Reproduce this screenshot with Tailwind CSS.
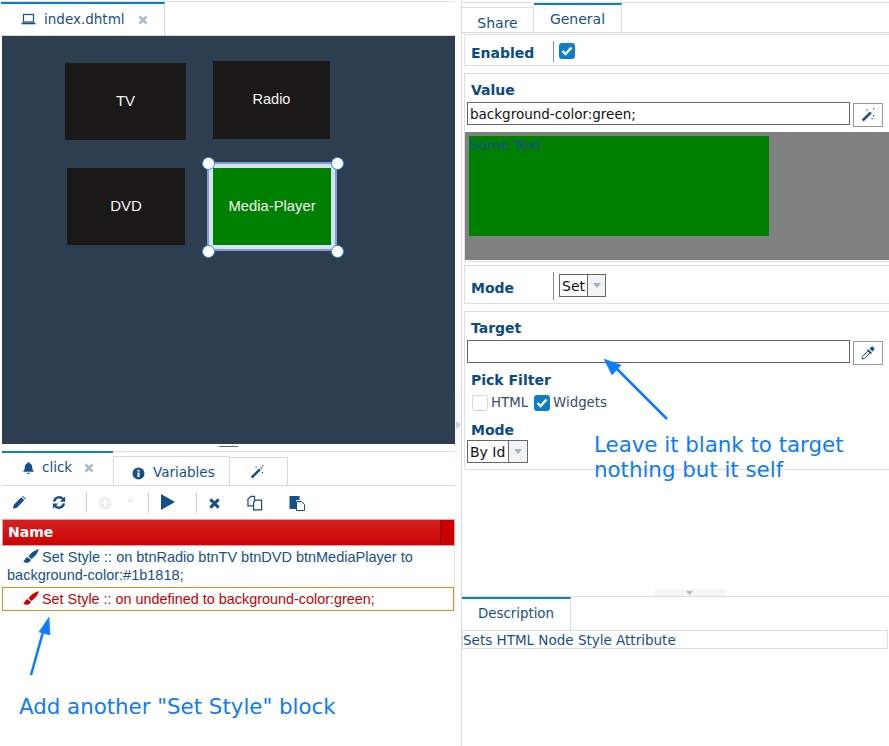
<!DOCTYPE html>
<html lang="en">
<head>
<meta charset="UTF-8">
<title>index.dhtml</title>
<script src="https://cdn.jsdelivr.net/npm/@tailwindcss/browser@4"></script>
</head>
<body class="bg-white">
<div class="relative w-[889px] h-[746px] overflow-hidden flex font-['DejaVu_Sans',sans-serif] text-[14px] text-[#15508c]">

  <!-- left pane -->
  <div class="w-[453px] ml-[2px] h-full flex flex-col shrink-0">
    <div class="h-[35px] mt-[1px] border-t border-b border-t-[#dcdfe3] border-b-[#d5d8dc] flex shrink-0 -ml-[1px]">
      <div class="w-[164px] h-[33px] border-t-2 border-t-[#0d7fc4] border-r border-r-[#d5d8dc] flex items-center pl-[20px]">
        <svg width="15" height="13" viewBox="0 0 15 13" class="mr-[8px]" fill="none" stroke="#15508c" stroke-width="1.2"><rect x="2.500" y="1.500" width="10" height="7.500"/><path d="M0.500 10.500h14" stroke-width="1.600"/></svg>
        <span class="leading-none text-[13.500px]">index.dhtml</span>
        <svg width="10" height="10" viewBox="0 0 10 10" class="ml-[13px]"><path d="M1.500 1.500l7 7M8.500 1.500l-7 7" stroke="#a9bccd" stroke-width="2.800"/></svg>
      </div>
    </div>

    <!-- canvas -->
    <div class="relative h-[408px] bg-[#2c3e50] shrink-0 font-['Liberation_Sans',sans-serif] text-[#f5f5f5]">
      <div class="absolute left-[63px] top-[27px] w-[121px] h-[77px] bg-[#1b1818] flex items-center justify-center text-[15px]">TV</div>
      <div class="absolute left-[211px] top-[25px] w-[117px] h-[78px] bg-[#1b1818] flex items-center justify-center text-[14.500px]">Radio</div>
      <div class="absolute left-[65px] top-[132px] w-[118px] h-[77px] bg-[#1b1818] flex items-center justify-center text-[15px]">DVD</div>
      <div class="absolute left-[205px] top-[126px] w-[130px] h-[89px] border-2 border-[#7b9ed6] bg-[#d8e2f0] p-[4px]">
        <div class="w-full h-full bg-[#008000] flex items-center justify-center text-[14.800px]">Media-Player</div>
      </div>
      <div class="absolute left-[200px] top-[121px] w-[13px] h-[13px] rounded-full bg-white border border-[#2a8fd8]"></div>
      <div class="absolute left-[329px] top-[121px] w-[13px] h-[13px] rounded-full bg-white border border-[#2a8fd8]"></div>
      <div class="absolute left-[200px] top-[209px] w-[13px] h-[13px] rounded-full bg-white border border-[#2a8fd8]"></div>
      <div class="absolute left-[329px] top-[209px] w-[13px] h-[13px] rounded-full bg-white border border-[#2a8fd8]"></div>
    </div>

    <!-- horizontal splitter -->
    <div class="h-[7px] shrink-0 flex justify-center">
      <div class="w-[19px] h-px bg-[#666] mt-[2px]"></div>
    </div>

    <!-- event tabs -->
    <div class="h-[35px] border-t border-t-[#dcdfe3] border-b border-b-[#d5d8dc] flex shrink-0">
      <div class="w-[111px] h-[34px] -mt-px border-t-2 border-t-[#0d7fc4] flex items-center pl-[20px] pb-[2px]">
        <svg width="13" height="14" viewBox="0 0 14 14" fill="#15508c" class="mr-[7px]"><path d="M7 0.500a1 1 0 0 1 1 1v0.400c2 .5 3 2.200 3 4.100 0 3 1 4 2 5H1c1-1 2-2 2-5 0-1.900 1-3.600 3-4.100V1.500a1 1 0 0 1 1-1z"/><path d="M5.500 12h3a1.500 1.500 0 0 1-3 0z"/></svg>
        <span class="leading-none text-[13.500px]">click</span>
        <svg width="10" height="10" viewBox="0 0 10 10" class="ml-[12px]"><path d="M1.500 1.500l7 7M8.500 1.500l-7 7" stroke="#a9bccd" stroke-width="2.800"/></svg>
      </div>
      <div class="w-[117px] h-[30px] mt-[4px] border-t border-l border-r border-[#d5d8dc] flex items-center pl-[18px] pt-[3px]">
        <svg width="13" height="13" viewBox="0 0 13 13" class="mr-[8px]"><circle cx="6.500" cy="6.500" r="6" fill="#15508c"/><rect x="5.500" y="5.500" width="2" height="4.500" fill="#fff"/><rect x="5.500" y="2.800" width="2" height="1.800" fill="#fff"/></svg>
        <span class="leading-none text-[13.500px]">Variables</span>
      </div>
      <div class="w-[58px] h-[29px] mt-[5px] border-t border-r border-[#d5d8dc] flex items-center pl-[20px]">
        <svg width="14" height="14" viewBox="0 0 14 14" fill="#15508c"><path d="M0.800 11.600 9 3.400l1.800 1.800L2.600 13.400z"/><path d="M9.800 2.600l1-1 1.800 1.800-1 1z" fill="#7a8fa5"/><path d="M5.500 1.500h1.200v1.200H5.500zM12 7h1.200v1.200H12zM12 0.300h1.200v1.200H12z"/></svg>
      </div>
    </div>

    <!-- toolbar -->
    <div class="h-[33px] flex items-center shrink-0 relative">
      <svg width="14" height="15" viewBox="0 0 16 16" fill="#15508c" class="ml-[10px]"><path d="M1 15l1-4.500L10.500 2 14 5.500 5.500 14z"/><path d="M11.500 1l1-.5 3 3-.5 1z"/></svg>
      <svg width="14" height="15" viewBox="0 0 16 16" fill="none" stroke="#15508c" stroke-width="2.800" class="ml-[26px]"><path d="M2.500 7A5.800 5.800 0 0 1 13 4.500"/><path d="M13.500 9A5.800 5.800 0 0 1 3 11.500"/><path d="M15 1v6h-6z" fill="#15508c" stroke="none"/><path d="M1 15V9h6z" fill="#15508c" stroke="none"/></svg>
      <div class="w-px h-[20px] bg-[#c6c9cc] ml-[20px]"></div>
      <svg width="14" height="14" viewBox="0 0 16 16" class="ml-[11px]"><circle cx="8" cy="8" r="7.500" fill="#eceef0"/><path d="M7 4h2v3h3v2H9v3H7V9H4V7h3z" fill="#fff"/></svg>
      <svg width="7" height="4" viewBox="0 0 9 5" class="ml-[15px] mb-[4px]"><path d="M0 0h9L4.500 5z" fill="#e9ebed"/></svg>
      <div class="w-px h-[20px] bg-[#c6c9cc] ml-[14px]"></div>
      <svg width="14" height="16" viewBox="0 0 14 16" class="ml-[12px] -mt-[2px]"><path d="M0 0l14 8-14 8z" fill="#15508c"/></svg>
      <div class="w-px h-[20px] bg-[#c6c9cc] ml-[21px]"></div>
      <svg width="11" height="11" viewBox="0 0 12 12" class="ml-[12px] mt-[2px]"><path d="M1.500 1.500l9 9M10.500 1.500l-9 9" stroke="#15508c" stroke-width="3.200"/></svg>
      <svg width="16" height="16" viewBox="0 0 17 16" fill="none" stroke="#15508c" stroke-width="1.300" class="ml-[27px]"><path d="M7 11H1V4l3-3h4v4"/><path d="M7 15.300V7.500l2-2.500h6.500v10.300z" fill="#fff"/></svg>
      <svg width="16" height="16" viewBox="0 0 16 16" class="ml-[26px]"><path d="M0.500 1h10v4H7v9H0.500z" fill="#15508c"/><path d="M7.500 6.500h5l3 3v6h-8z" fill="#fff" stroke="#15508c"/></svg>
    </div>

    <!-- event table -->
    <div class="h-[27px] shrink-0 flex bg-linear-to-b from-[#d71f1f] to-[#cc0000] border border-[#e3a0a0] text-white">
      <div class="flex-1 pl-[5px] font-bold text-[14px] leading-[25px]">Name</div>
      <div class="w-[14px] border-l border-l-[#7e1010] bg-[#cc0000]"></div>
    </div>
    <div class="border-r border-r-[#e1e3e6] font-['Liberation_Sans',sans-serif] text-[14.500px] leading-[18px] text-[#15508c] h-[65px] shrink-0">
      <div class="px-[5px] pt-[2px] h-[41px] w-[440px]">
        <svg width="16" height="15" viewBox="0 0 16 15" class="inline-block ml-[16px] -mt-[3px] mr-[3px]" fill="#15508c"><path d="M15.800 .3C12 1 7.500 4 5.500 7.500L8.500 10C11.500 8 15 4 15.800 .3z"/><path d="M4.500 8.200C2 8.500 2.500 11 .2 12.500 2.500 14.500 7 14.500 8 10.800z"/></svg>Set Style :: on btnRadio btnTV btnDVD btnMediaPlayer to background-color:#1b1818;
      </div>
      <div class="h-[24px] border border-[#ee8a1c] px-[4px] leading-[22px] text-[#cc0000] text-[14.400px] whitespace-nowrap">
        <svg width="16" height="15" viewBox="0 0 16 15" class="inline-block ml-[16px] -mt-[3px] mr-[3px]" fill="#cc0000"><path d="M15.800 .3C12 1 7.500 4 5.500 7.500L8.500 10C11.500 8 15 4 15.800 .3z"/><path d="M4.500 8.200C2 8.500 2.500 11 .2 12.500 2.500 14.500 7 14.500 8 10.800z"/></svg>Set Style :: on undefined to background-color:green;
      </div>
    </div>
  </div>

  <!-- vertical splitter -->
  <div class="w-[6px] shrink-0 h-full relative">
    <div class="absolute left-0 top-[390px] w-[6px] h-[69px] bg-[#f8f8f8]"></div>
    <svg width="5" height="8" viewBox="0 0 5 8" class="absolute left-px top-[421px]"><path d="M0 0l5 4-5 4z" fill="#c4cfdd"/></svg>
  </div>

  <!-- right pane -->
  <div class="flex-1 h-full border-l border-l-[#d5d8dc] flex flex-col min-w-0">
    <div class="h-[31px] shrink-0 mt-[2px] border-t border-t-[#dcdfe3] border-b border-b-[#d5d8dc] flex">
      <div class="w-[72px] h-[25px] mt-[4px] border-t border-t-[#dcdfe3] border-r border-r-[#d5d8dc] flex items-center justify-center pt-[7px]">Share</div>
      <div class="w-[88px] h-[29px] border-t-2 border-t-[#0d7fc4] border-r border-r-[#d5d8dc] flex items-center justify-center pt-[2px]">General</div>
    </div>

    <div class="ml-[2px] mt-px h-[32px] shrink-0 border border-[#dcdfe3] border-r-0 flex items-center">
      <div class="w-[88px] pl-[6px] font-bold text-[#0b4a85] pt-[6px]">Enabled</div>
      <div class="w-px h-[21px] bg-[#888] mt-[3px]"></div>
      <div class="ml-[5px] w-[16px] h-[16px] mt-px rounded-[3px] bg-[#0d7fc4] flex items-center justify-center">
        <svg width="12" height="10" viewBox="0 0 12 10" fill="none" stroke="#fff" stroke-width="2.400"><path d="M1.500 5l3 3 6-6.500"/></svg>
      </div>
    </div>

    <div class="ml-[2px] mt-[7px] h-[189px] shrink-0 border border-[#dcdfe3] border-r-0 flex flex-col">
      <div class="h-[28px] pl-[6px] pt-[7px] font-bold text-[#0b4a85] leading-[18px]">Value</div>
      <div class="flex h-[30px] pl-[2px]">
        <div class="w-[383px] h-[23px] border border-[#666] pl-[2px] leading-[23px] text-[#111] text-[13.500px]">background-color:green;</div>
        <div class="w-[30px] h-[24px] ml-[3px] mt-px border border-[#999] flex items-center justify-center">
          <svg width="14" height="14" viewBox="0 0 14 14" fill="#15508c"><path d="M0.800 11.600 9 3.400l1.800 1.800L2.600 13.400z"/><path d="M5.500 1.500h1.200v1.200H5.500zM12 7h1.200v1.200H12zM12 0.300h1.200v1.200H12zM10.500 10h1.200v1.200h-1.200z"/></svg>
        </div>
      </div>
      <div class="h-[128px] bg-[#808080] pl-[4px] pt-[4px]">
        <div class="w-[300px] h-[100px] bg-[#008000] text-[#15508c] text-[14px] leading-[18px]">Some Text</div>
      </div>
    </div>

    <div class="ml-[2px] mt-[3px] h-[39px] shrink-0 border border-[#dcdfe3] border-r-0 flex items-center">
      <div class="w-[88px] pl-[6px] font-bold text-[#0b4a85] pt-[7px]">Mode</div>
      <div class="w-px h-[28px] bg-[#888] mt-[3px]"></div>
      <div class="ml-[5px] mt-px h-[23px] flex border border-[#666] text-[#111]">
        <span class="px-[2px] leading-[23px]">Set</span>
        <span class="w-[18px] border-l border-l-[#666] bg-[#f2f3f5] flex items-center justify-center"><svg width="8" height="5" viewBox="0 0 8 5"><path d="M0 0h8L4 5z" fill="#9fb0c8"/></svg></span>
      </div>
    </div>

    <div class="ml-[2px] mt-[7px] h-[159px] shrink-0 border border-[#dcdfe3] border-r-0 flex flex-col">
      <div class="h-[28px] pl-[6px] pt-[7px] font-bold text-[#0b4a85] leading-[18px]">Target</div>
      <div class="flex h-[30px] pl-[2px]">
        <div class="w-[383px] h-[23px] border border-[#666]"></div>
        <div class="w-[30px] h-[24px] ml-[3px] mt-px border border-[#999] flex items-center justify-center">
          <svg width="14" height="14" viewBox="0 0 14 14" fill="#15508c"><path d="M8.500 2.500 10.500.8c1-.9 3.500 1.600 2.700 2.700l-1.700 2z"/><path d="M7 3l4 4-1 1-4-4z"/><path d="M7 5 1.500 10.500 1 13l2.500-.5L9 7z" fill="none" stroke="#15508c"/></svg>
        </div>
      </div>
      <div class="pl-[6px] font-bold text-[#0b4a85] leading-[18px] mt-px">Pick Filter</div>
      <div class="flex items-center pl-[7px] h-[18px] mt-[5px] text-[#2f4f6f] text-[13.330px]">
        <span class="w-[16px] h-[16px] rounded-[3px] border border-[#d5d8dc] bg-white"></span>
        <span class="ml-[3px]">HTML</span>
        <span class="ml-[6px] w-[16px] h-[16px] rounded-[3px] bg-[#0d7fc4] flex items-center justify-center"><svg width="12" height="10" viewBox="0 0 12 10" fill="none" stroke="#fff" stroke-width="2.400"><path d="M1.500 5l3 3 6-6.500"/></svg></span>
        <span class="ml-[3px]">Widgets</span>
      </div>
      <div class="pl-[6px] font-bold text-[#0b4a85] leading-[18px] mt-[9px]">Mode</div>
      <div class="ml-[2px] w-[61px] h-[23px] mt-px flex border border-[#666] text-[#111]">
        <span class="flex-1 pl-[2px] leading-[23px] whitespace-nowrap">By Id</span>
        <span class="w-[19px] border-l border-l-[#666] bg-[#f2f3f5] flex items-center justify-center"><svg width="8" height="5" viewBox="0 0 8 5"><path d="M0 0h8L4 5z" fill="#9fb0c8"/></svg></span>
      </div>
    </div>

    <!-- lower splitter -->
    <div class="h-[7px] mt-[119px] shrink-0 flex">
      <div class="w-[71px] h-[7px] bg-[#f4f5f6] ml-[192px] flex items-center justify-center"><svg width="7" height="4" viewBox="0 0 7 4"><path d="M0 0h7L3.500 4z" fill="#b5bcc6"/></svg></div>
    </div>
    <div class="h-[34px] shrink-0 border-t border-t-[#dcdfe3] flex">
      <div class="w-[109px] h-[33px] border-t-2 border-t-[#0d7fc4] border-r border-r-[#d5d8dc] flex items-center justify-center text-[13.330px] pb-px">Description</div>
    </div>
    <div class="h-[19px] shrink-0 border border-[#dcdfe3] mr-px leading-[18px] whitespace-nowrap text-[13.500px]">Sets HTML Node Style Attribute</div>
  </div>

  <!-- annotations drawn over the screenshot -->
  <svg class="absolute left-0 top-0 pointer-events-none" width="889" height="746" viewBox="0 0 889 746">
    <g stroke="#0b7bff" stroke-width="2.500" fill="#0b7bff">
      <path d="M31 675 43 632" fill="none"/>
      <path d="M49 617 50 635 39 632z" stroke-width="0.500"/>
      <path d="M667 419 615 367" fill="none"/>
      <path d="M604 359 621 365 612 375z" stroke-width="0.500"/>
    </g>
  </svg>
  <div class="absolute left-[19px] top-[693px] text-[21.330px] leading-[28px] text-[#0b7bff] whitespace-nowrap">Add another "Set Style" block</div>
  <div class="absolute left-[594px] top-[432px] text-[21.330px] leading-[25px] text-[#0b7bff] whitespace-nowrap">Leave it blank to target<br>nothing but it self</div>
</div>
</body>
</html>
